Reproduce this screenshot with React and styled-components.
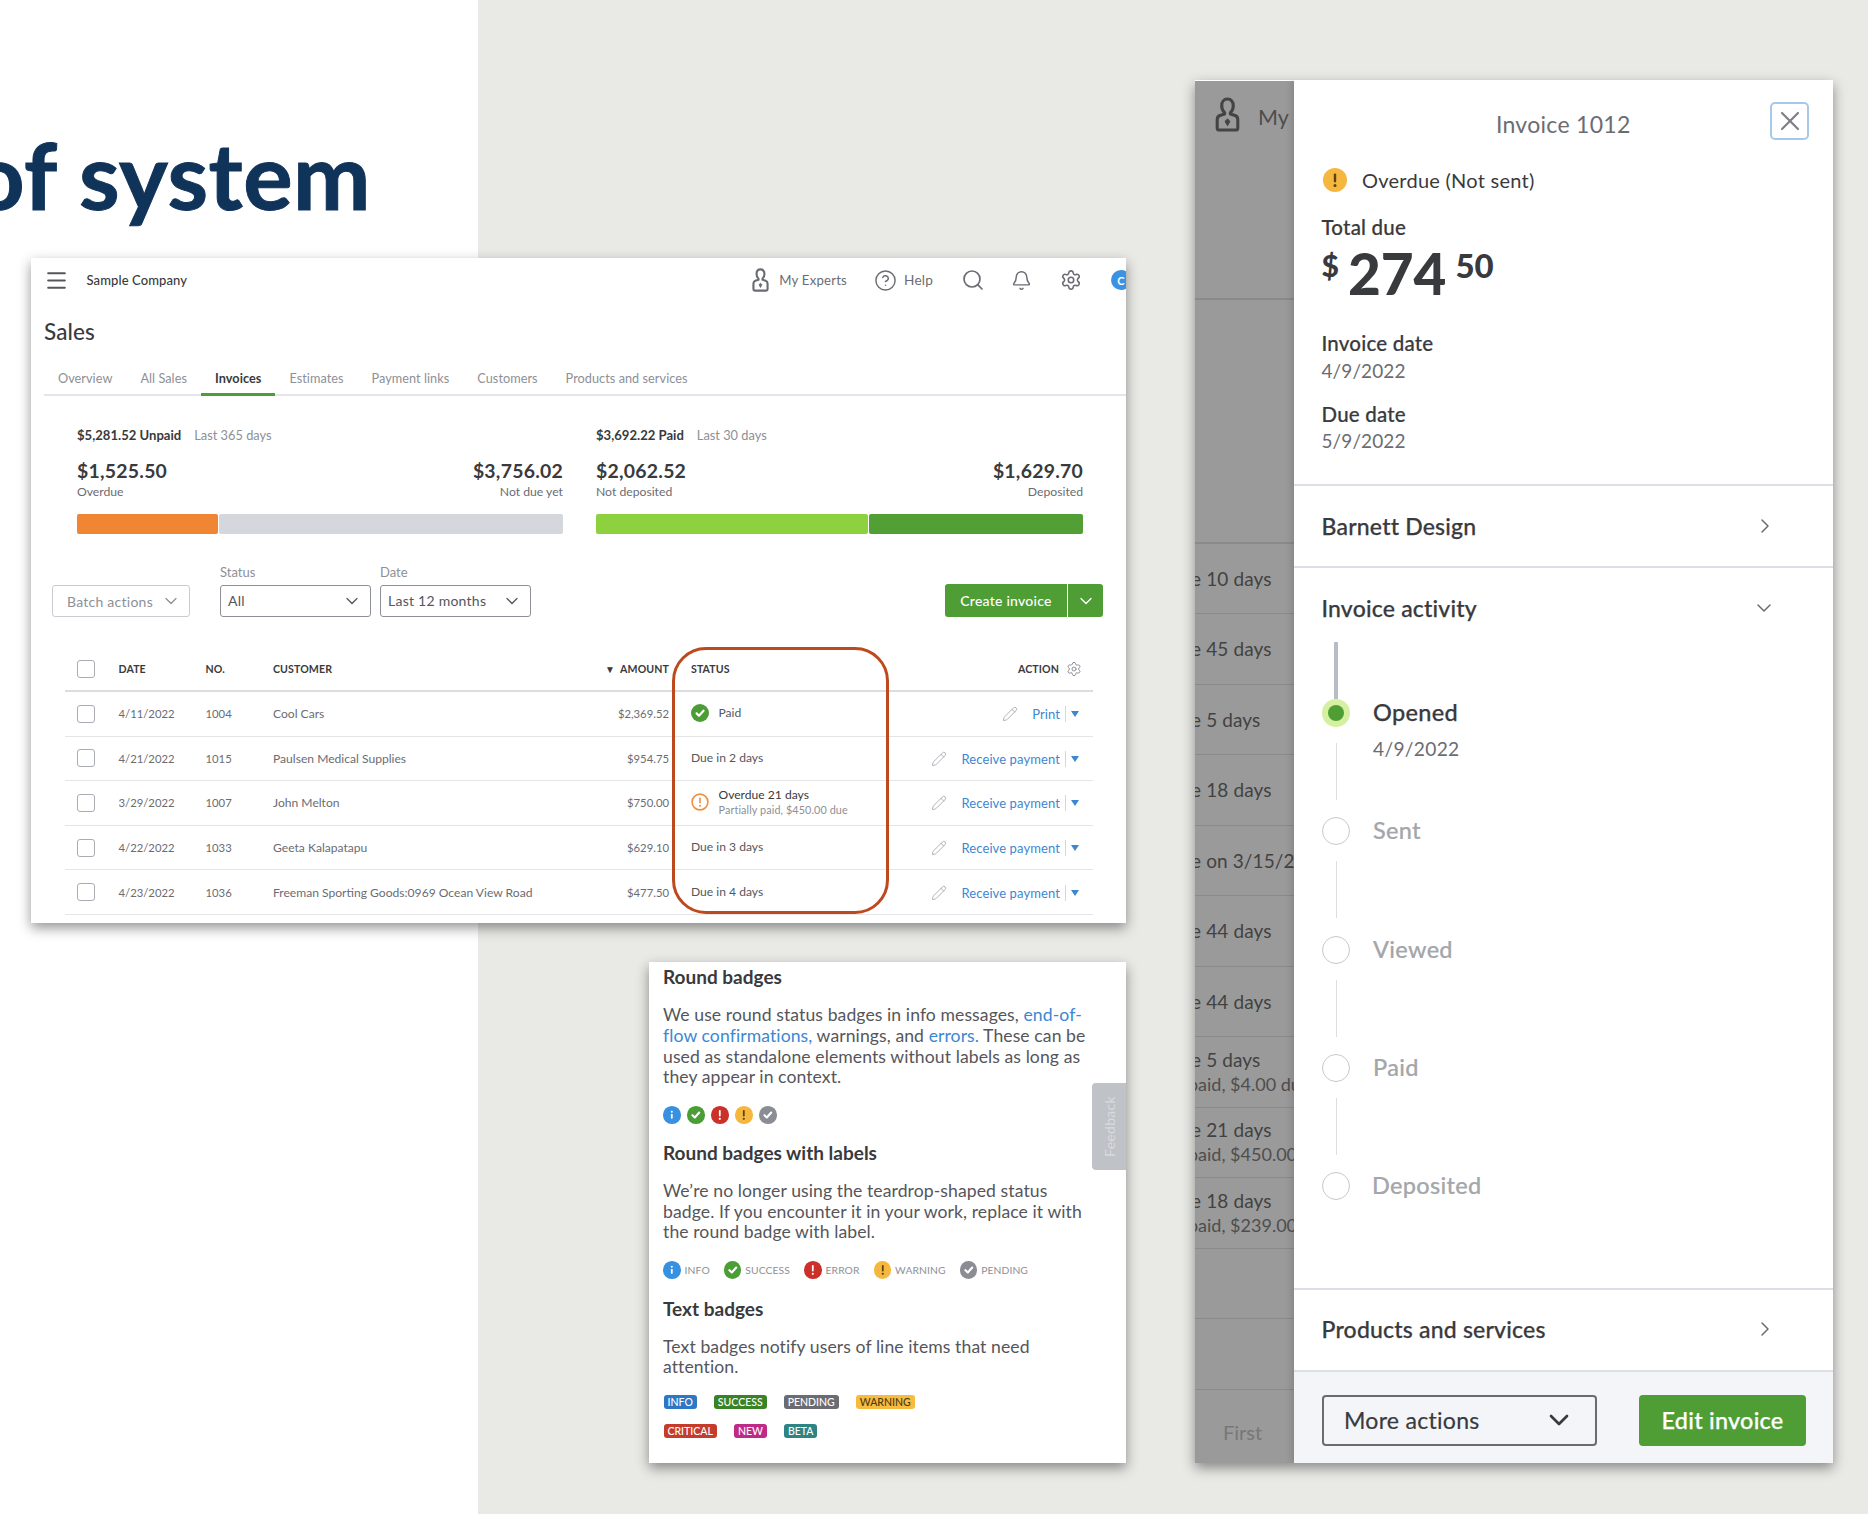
import React from "react";
import styled, { createGlobalStyle } from "styled-components";
import { Search, Bell, Settings, ChevronDown, ChevronRight, X, Pencil, CircleHelp, Menu } from "lucide-react";

const Global = createGlobalStyle`
  html, body { margin: 0; padding: 0; background: #e9eae6; }
  * { box-sizing: border-box; }
  body { font-family: Lato, "Noto Sans", "Liberation Sans", sans-serif; color: #393a3d; }
`;

const Canvas = styled.div`
  position: relative; width: 1868px; height: 1514px; overflow: hidden;
  background: #e9eae6; display: flex;
`;
const Hero = styled.div`
  width: 478px; height: 100%; background: #fff; overflow: hidden;
  display: flex; justify-content: flex-end; padding: 117px 107px 0 0;
`;
const HeroTitle = styled.h1`
  margin: 0; flex: none; font-size: 92.5px; line-height: 116px; font-weight: 700;
  color: #10335a; white-space: nowrap; height: 116px; -webkit-text-stroke: 1px #10335a; letter-spacing: .5px;
`;
const Window = styled.section`
  position: absolute; left: ${p => p.$x}px; top: ${p => p.$y}px;
  width: ${p => p.$w}px; height: ${p => p.$h}px;
  background: #fff; overflow: hidden;
  box-shadow: 0 5px 12px rgba(0,0,0,.42);
`;

/* sales */
const TopBar = styled.header`
  height: 44px; display: flex; align-items: center; padding-left: 13px; color: #6b6c72;
`;
const Company = styled.span`
  margin-left: 17.5px; font-size: 13px; color: #393a3d; font-weight: 500; letter-spacing: .1px;
`;
const TopActions = styled.div` margin-left: auto; display: flex; align-items: center; `;
const TopLink = styled.span`
  display: flex; align-items: center; gap: ${p => p.$gap || 10}px; font-size: ${p => p.$fs || 13.6}px; color: #6b6c72;
  margin-right: ${p => p.$mr || 0}px; letter-spacing: .2px;
`;
const Avatar = styled.span`
  width: 20px; height: 20px; border-radius: 50%; background: #3b92e3; color: #fff; flex: none;
  font-size: 11px; font-weight: 700; display: flex; align-items: center; justify-content: center;
  margin-right: -5px;
`;
const PageTitle = styled.h2`
  margin: 0; height: 60px; display: flex; align-items: center; padding: 0 0 2px 13px;
  font-size: 22.5px; font-weight: 500; color: #393a3d; letter-spacing: .1px;
`;
const Tabs = styled.nav`
  height: 34px; margin-left: 13px; display: flex; border-bottom: 2px solid #e3e5ea;
`;
const Tab = styled.span`
  height: 34px; padding: 0 14px; display: flex; align-items: center; font-size: 12.7px;
  color: ${p => p.$active ? "#393a3d" : "#8d9096"}; font-weight: ${p => p.$active ? 700 : 400};
  border-bottom: 3px solid ${p => p.$active ? "#4f9e35" : "transparent"};
  letter-spacing: .05px;
`;
const Stats = styled.div`
  display: grid; grid-template-columns: 486px 487px; column-gap: 33px; padding: 30px 0 0 46px;
`;
const StatTop = styled.div`
  font-size: 12.8px; line-height: 18px; height: 18px; display: flex; gap: 13px; color: #8d9096;
  b { color: #393a3d; font-weight: 700; font-size: 13.1px; }
`;
const StatSplit = styled.div` display: flex; justify-content: space-between; margin-top: 16px; `;
const StatAmount = styled.div`
  font-size: 19.4px; line-height: 22px; font-weight: 700; color: #393a3d; letter-spacing: .25px;
  text-align: ${p => p.$right ? "right" : "left"};
`;
const StatLabel = styled.div`
  font-size: 12.2px; line-height: 16px; margin-top: 2px; color: #6b6c72;
  text-align: ${p => p.$right ? "right" : "left"};
`;
const Bar = styled.div` display: flex; gap: 1px; height: 20px; margin-top: 14px; `;
const BarPart = styled.div`
  border-radius: 2px; background: ${p => p.$c};
`;
const Filters = styled.div`
  margin-top: 30px; padding: 0 23px 0 21px; display: flex; align-items: flex-end; height: 53px;
`;
const Field = styled.label`
  display: flex; flex-direction: column; margin-left: ${p => p.$ml}px;
  font-size: 13px; line-height: 14px; color: #8d9096; gap: 6px;
`;
const Select = styled.div`
  width: ${p => p.$w}px; height: 32px; border-radius: 3px; background: #fff;
  border: 1px solid ${p => p.$muted ? "#c9ccd1" : "#8d9096"};
  color: ${p => p.$muted ? "#8d9096" : "#55565b"}; font-size: 14px; letter-spacing: .25px;
  display: flex; align-items: center; justify-content: space-between; padding: 0 8px 0 ${p => p.$muted ? 14 : 7}px;
`;
const Split = styled.div`
  margin-left: auto; display: flex; gap: 1px; height: 33px; color: #fff; font-size: 14px; letter-spacing: .25px;
`;
const SplitPart = styled.div`
  width: ${p => p.$w}px; background: #4f9e35; border-radius: ${p => p.$r};
  display: flex; align-items: center; justify-content: center; font-weight: 500;
`;
const Table = styled.div` margin: 31px 33px 0 34px; `;
const Row = styled.div`
  display: grid; grid-template-columns: 41.5px 87px 67.5px 1fr 100px 180px 244px;
  height: ${p => p.$head ? 44 : 44.6}px; align-items: center; padding-left: 12px;
  border-bottom: ${p => p.$head ? 2 : 1}px solid ${p => p.$head ? "#dcdde0" : "#e3e5e8"};
  font-size: 12.1px; color: #6b6c72;
`;
const Head = styled.span`
  font-size: 10.6px; font-weight: 700; color: #393a3d; letter-spacing: .1px; white-space: nowrap;
  text-align: ${p => p.$right ? "right" : "left"};
  padding-left: ${p => p.$pl || 0}px;
`;
const Box = styled.span`
  width: 18px; height: 18px; border: 1px solid #a9acb2; border-radius: 3px; display: block; background: #fff;
`;
const Numeric = styled.span` font-size: 11.3px; text-align: ${p => p.$right ? "right" : "left"}; `;
const StatusCell = styled.div`
  padding-left: 22px; display: flex; align-items: center; color: #55565b; gap: 9.5px; position: relative; top: -1px;
`;
const StatusStack = styled.div`
  line-height: 15px; color: #393a3d; font-size: 12.1px;
  small { display: block; font-size: 10.8px; color: #8d9096; letter-spacing: .1px; }
`;
const ActionCell = styled.div`
  display: flex; align-items: center; justify-content: flex-end; padding-right: 14px;
  color: #3b87d1; font-size: 13px; letter-spacing: .1px; position: relative; top: .5px;
`;
const ActionHead = styled.div`
  display: flex; align-items: center; justify-content: flex-end; gap: 7px; padding-right: 11px; color: #8d9096;
`;
const EditIcon = styled.span` display: flex; color: #a9acb2; margin-right: 14px; `;
const Sep = styled.span` width: 1px; height: 16px; background: #d4d7dc; margin: 0 5px; `;
const Caret = styled.span`
  width: 0; height: 0; border-left: 4.5px solid transparent; border-right: 4.5px solid transparent;
  border-top: 6px solid #3b87d1;
`;
const SortArrow = styled.span` font-size: 10px; margin-right: 5px; `;
const Highlight = styled.div`
  position: absolute; left: 641px; top: 389px; width: 217px; height: 267px;
  border: 3px solid #bd4a1f; border-radius: 34px; pointer-events: none;
`;

/* docs */
const Doc = styled.div`
  padding: 5px 14px 0 14px; display: flex; flex-direction: column; gap: 18.3px;
`;
const DocHeading = styled.h3`
  margin: ${p => p.$mt || 0}px 0 ${p => p.$mb || 0}px; font-size: 19px; line-height: 20px; font-weight: 700; color: #393a3d;
`;
const DocText = styled.p`
  margin: 0 0 ${p => p.$mb || 0}px; font-size: 17.6px; line-height: 20.67px; color: #55565b; white-space: nowrap; letter-spacing: .08px;
  a { color: #3b87d1; }
`;
const BadgeRow = styled.div` display: flex; align-items: center; height: 18px; gap: ${p => p.$gap}px; `;
const Labelled = styled.span`
  display: flex; align-items: center; gap: 4px; font-size: 10.3px; color: #8d9096; letter-spacing: .1px;
`;
const TextRows = styled.div` display: flex; flex-direction: column; gap: 15px; `;
const TextRow = styled.div` display: flex; gap: 17px; padding-left: .5px; `;
const TextBadge = styled.span`
  height: 14px; padding: 0 4px; border-radius: 3px; background: ${p => p.$bg}; color: ${p => p.$fg || "#fff"};
  font-size: 10.5px; line-height: 14px; font-weight: 500;
`;
const Feedback = styled.div`
  position: absolute; right: 0; top: 121px; width: 34px; height: 87px; background: #bfc2c6;
  border-radius: 4px 0 0 4px; color: #d9dbde; font-size: 14px; letter-spacing: .3px;
  display: flex; align-items: center; justify-content: center;
  span { transform: rotate(-90deg); white-space: nowrap; }
`;

/* invoice */
const Panes = styled.div` display: flex; height: 100%; padding-top: 1px; `;
const Strip = styled.div`
  width: 98.5px; flex: none; background: #9a9a9a; overflow: hidden; color: #3f3f3f;
`;
const StripHead = styled.div`
  height: 218.5px; padding: 16px 0 0 20px; display: flex; gap: 18px; align-items: flex-start;
  border-bottom: 2px solid #8a8a8a; font-size: 21.5px; color: #4e4e4e; line-height: 40px;
`;
const StripBlank = styled.div` height: 244px; border-bottom: 2px solid #8a8a8a; `;
const StripRow = styled.div`
  height: 70.5px; border-bottom: 1px solid #8a8a8a; display: flex; flex-direction: column; justify-content: center;
  font-size: 19px; line-height: 25px; white-space: nowrap; color: #424242;
`;
const Clip = styled.span` display: block; margin-left: -67px; letter-spacing: .1px; `;
const ClipSub = styled.span` display: block; margin-left: -75px; font-size: 18px; color: #4e4e4e; `;
const StripFirst = styled.div`
  padding: 28px 0 0 28px; font-size: 20px; color: #777; line-height: 28px;
`;
const Drawer = styled.div`
  flex: 1; background: #fff; display: flex; flex-direction: column; box-shadow: -3px 0 6px rgba(0,0,0,.12); position: relative; margin-top: -1px; padding-top: 1px;
`;
const Summary = styled.div`
  height: 405px; border-bottom: 2px solid #dcdfe6; flex: none;
`;
const DrawerHead = styled.div`
  display: grid; grid-template-columns: 1fr auto 1fr; padding: 21px 24px 0 0; height: 59px;
`;
const DrawerTitle = styled.div`
  grid-column: 2; font-size: 23px; line-height: 26px; color: #6b6c72; margin-top: 9px; letter-spacing: .3px; padding-left: 24px;
`;
const CloseButton = styled.div`
  justify-self: end; grid-column: 3; width: 39px; height: 38px; border: 2.5px solid #a8c8e8; border-radius: 5px;
  display: flex; align-items: center; justify-content: center; color: #7d7f85;
`;
const SummaryBody = styled.div` padding: 28px 0 0 28px; `;
const StatusLine = styled.div`
  display: flex; align-items: center; gap: 15px; font-size: 20px; line-height: 24px; color: #393a3d; padding-left: 1.5px; letter-spacing: .25px;
`;
const FieldLabel = styled.div`
  font-size: 20.5px; line-height: 24px; color: #393a3d; font-weight: 500; letter-spacing: .2px;
  margin-top: ${p => p.$mt}px;
  -webkit-text-stroke: .2px #393a3d;
`;
const FieldValue = styled.div`
  font-size: 19px; line-height: 24px; color: #6b6c72; margin-top: ${p => p.$mt}px; letter-spacing: .1px;
`;
const Total = styled.div`
  height: 56px; display: flex; align-items: flex-start; color: #393a3d; font-weight: 900; margin-top: 6px;
`;
const Currency = styled.span` font-size: 30px; line-height: 30px; margin-top: 5px; margin-right: 9px; `;
const Dollars = styled.span` font-size: 56.6px; line-height: 56px; margin-right: 9px; `;
const Cents = styled.span` font-size: 33px; line-height: 34px; margin-top: 3px; `;
const DrawerRow = styled.div`
  height: 82px; flex: none; display: flex; align-items: center; justify-content: space-between; padding: 0 56px 1px 28px;
  border-bottom: 2px solid #dcdfe6; font-size: 23px; color: #393a3d; font-weight: 500; letter-spacing: .2px;
  -webkit-text-stroke: .25px #393a3d;
  svg { color: #6b6c72; }
`;
const Activity = styled.div`
  height: 721.5px; flex: none; border-bottom: 2px solid #dcdfe6; padding: 26px 0 0 28.5px;
`;
const ActivityHead = styled.div`
  height: 28px; display: flex; align-items: center; justify-content: space-between; padding-right: 57px;
  font-size: 23px; color: #393a3d; font-weight: 500; letter-spacing: .2px; margin-left: -.5px;
  -webkit-text-stroke: .25px #393a3d;
  svg { color: #6b6c72; }
`;
const TopStem = styled.div` width: 4px; height: 57px; background: #b9bcc6; margin: 20px 0 0 12px; `;
const Step = styled.div`
  height: 118.3px; display: grid; grid-template-columns: 28px 1fr; column-gap: ${p => p.$gap || 23}px;
`;
const Marker = styled.div` display: flex; flex-direction: column; align-items: center; `;
const Dot = styled.span`
  width: 28px; height: 28px; border-radius: 50%; flex: none; display: flex; align-items: center; justify-content: center;
  border: ${p => p.$active ? "none" : "1.5px solid #c6c8cc"};
  background: ${p => p.$active ? "#d5f0a0" : "#fff"};
  i { width: 16px; height: 16px; background: #4f9e35; border-radius: 50%; display: ${p => p.$active ? "block" : "none"}; }
`;
const Stem = styled.span` width: 1px; height: 57px; background: #dcdee1; margin-top: 16px; `;
const StepTitle = styled.div`
  font-size: 23.5px; line-height: 28px; letter-spacing: .3px; font-weight: 500; margin-top: -1px;
  color: ${p => p.$active ? "#393a3d" : "#a4a6aa"};
  ${p => p.$active ? "-webkit-text-stroke: .25px #393a3d;" : "-webkit-text-stroke: .2px #a4a6aa;"}
`;
const StepDate = styled.div`
  font-size: 19.2px; line-height: 26px; color: #6b6c72; margin-top: 10px; letter-spacing: .3px;
`;
const Footer = styled.div`
  flex: 1; background: #f3f5f9; padding: 23px 27px 0 28.5px; display: flex; justify-content: space-between; align-items: flex-start;
`;
const MoreActions = styled.div`
  width: 275px; height: 51px; border: 2px solid #6b6c72; border-radius: 4px; display: flex; align-items: center; justify-content: space-between;
  padding: 0 20px 0 20px; font-size: 23.1px; color: #393a3d; letter-spacing: .25px; -webkit-text-stroke: .2px #393a3d;
`;
const EditButton = styled.div`
  width: 167px; height: 51px; border-radius: 4px; background: #4f9e35; color: #fff; display: flex; align-items: center; justify-content: center;
  font-size: 23.4px; letter-spacing: .25px; font-weight: 500; -webkit-text-stroke: .25px #fff;
`;

const BadgeShape = styled.span`
  width: ${p => p.$s}px; height: ${p => p.$s}px; border-radius: 50%; background: ${p => p.$c}; flex: none; color: ${p => p.$fg};
  display: inline-flex; align-items: center; justify-content: center;
`;
const colors = { info: "#3790e0", success: "#4a9e35", error: "#cb3029", warning: "#f5b73d", pending: "#8b8d94" };
const Glyph = ({ kind }) => {
  if (kind === "success" || kind === "pending")
    return <svg viewBox="0 0 20 20" width="100%" height="100%" fill="none" stroke="currentColor" strokeWidth="2.4" strokeLinecap="round" strokeLinejoin="round"><path d="M6.2 10.4l2.7 2.6 5-5.6" /></svg>;
  if (kind === "info")
    return <svg viewBox="0 0 20 20" width="100%" height="100%" fill="currentColor"><circle cx="10" cy="6.6" r="1.2" /><rect x="9" y="9" width="2" height="5.5" rx=".8" /></svg>;
  return <svg viewBox="0 0 20 20" width="100%" height="100%" fill="currentColor"><rect x="9" y="4.6" width="2" height="7.4" rx=".9" /><circle cx="10" cy="14.6" r="1.25" /></svg>;
};
const RoundBadge = ({ kind, size = 18 }) => (
  <BadgeShape $s={size} $c={colors[kind]} $fg={kind === "warning" ? "#5a4210" : "#fff"}><Glyph kind={kind} /></BadgeShape>
);

const Expert = ({ w, h, color = "currentColor" }) => (
  <svg viewBox="0 0 24 34" width={w} height={h} fill="none" stroke={color} strokeWidth="3" strokeLinejoin="round">
    <path d="M12 2c-3.600 0-5.600 2.800-5.600 6.400 0 3 1.100 5.400 2.800 6.800v1.400L4.600 18C2.700 18.700 2 20 2 22v8c0 1.200.8 2 2 2h16c1.200 0 2-.8 2-2v-8c0-2-.7-3.300-2.600-4l-4.600-1.400v-1.400c1.700-1.400 2.800-3.800 2.800-6.800C17.600 4.800 15.600 2 12 2z" />
    <path d="M12 21.500l2.200 2.200-2.200 4-2.200-4z" fill={color} strokeWidth="1" />
  </svg>
);

const rows = [
  ["4/11/2022", "1004", "Cool Cars", "$2,369.52", "paid", "Print"],
  ["4/21/2022", "1015", "Paulsen Medical Supplies", "$954.75", "Due in 2 days", "Receive payment"],
  ["3/29/2022", "1007", "John Melton", "$750.00", "overdue", "Receive payment"],
  ["4/22/2022", "1033", "Geeta Kalapatapu", "$629.10", "Due in 3 days", "Receive payment"],
  ["4/23/2022", "1036", "Freeman Sporting Goods:0969 Ocean View Road", "$477.50", "Due in 4 days", "Receive payment"],
];

const OverdueIcon = () => (
  <svg width="18" height="18" viewBox="0 0 18 18" fill="none"><circle cx="9" cy="9" r="7.9" stroke="#f08f3c" strokeWidth="1.6" /><rect x="8.200" y="4.400" width="1.600" height="6" rx=".8" fill="#f08f3c" /><circle cx="9" cy="12.800" r="1" fill="#f08f3c" /></svg>
);

const Status = ({ v }) => {
  if (v === "paid") return <StatusCell><RoundBadge kind="success" /><span>Paid</span></StatusCell>;
  if (v === "overdue") return (
    <StatusCell><OverdueIcon /><StatusStack>Overdue 21 days<small>Partially paid, $450.00 due</small></StatusStack></StatusCell>
  );
  return <StatusCell>{v}</StatusCell>;
};

const sideRows = [
  ["Overdue 10 days"], ["Overdue 45 days"], ["Overdue 5 days"], ["Overdue 18 days"], ["Overdue on 3/15/2022"],
  ["Overdue 44 days"], ["Overdue 44 days"], ["Overdue 5 days", "Partially paid, $4.00 due"],
  ["Overdue 21 days", "Partially paid, $450.00 due"], ["Overdue 18 days", "Partially paid, $239.00 due"],
  [""], [""],
];

const steps = ["Sent", "Viewed", "Paid", "Deposited"];

export default function App() {
  return (
    <Canvas>
      <Global />
      <Hero><HeroTitle>of system</HeroTitle></Hero>

      <Window $x={31} $y={258} $w={1095} $h={665}>
        <TopBar>
          <Menu size={25} strokeWidth={1.9} color="#55565b" />
          <Company>Sample Company</Company>
          <TopActions>
            <TopLink $mr={27} $fs={13.2}><Expert w={17} h={24} />My Experts</TopLink>
            <TopLink $mr={28} $gap={7}><CircleHelp size={23} strokeWidth={1.5} />Help</TopLink>
            <TopLink $mr={26}><Search size={24} strokeWidth={1.7} /></TopLink>
            <TopLink $mr={28}><Bell size={21} strokeWidth={1.7} /></TopLink>
            <TopLink $mr={29}><Settings size={22} strokeWidth={1.7} /></TopLink>
            <Avatar>C</Avatar>
          </TopActions>
        </TopBar>
        <PageTitle>Sales</PageTitle>
        <Tabs>
          {["Overview", "All Sales", "Invoices", "Estimates", "Payment links", "Customers", "Products and services"].map(t =>
            <Tab key={t} $active={t === "Invoices"}>{t}</Tab>)}
        </Tabs>
        <Stats>
          <div>
            <StatTop><b>$5,281.52 Unpaid</b><span>Last 365 days</span></StatTop>
            <StatSplit>
              <div><StatAmount>$1,525.50</StatAmount><StatLabel>Overdue</StatLabel></div>
              <div><StatAmount $right>$3,756.02</StatAmount><StatLabel $right>Not due yet</StatLabel></div>
            </StatSplit>
            <Bar><BarPart $c="#f08534" style={{ width: 141 }} /><BarPart $c="#d4d7dc" style={{ flex: 1 }} /></Bar>
          </div>
          <div>
            <StatTop><b>$3,692.22 Paid</b><span>Last 30 days</span></StatTop>
            <StatSplit>
              <div><StatAmount>$2,062.52</StatAmount><StatLabel>Not deposited</StatLabel></div>
              <div><StatAmount $right>$1,629.70</StatAmount><StatLabel $right>Deposited</StatLabel></div>
            </StatSplit>
            <Bar><BarPart $c="#8ed13f" style={{ width: 272 }} /><BarPart $c="#529f36" style={{ flex: 1 }} /></Bar>
          </div>
        </Stats>
        <Filters>
          <Select $w={138} $muted>Batch actions <ChevronDown size={20} strokeWidth={1.5} color="#8d9096" /></Select>
          <Field $ml={30}>Status<Select $w={151}>All <ChevronDown size={20} strokeWidth={1.5} color="#55565b" /></Select></Field>
          <Field $ml={9}>Date<Select $w={151}>Last 12 months <ChevronDown size={20} strokeWidth={1.5} color="#55565b" /></Select></Field>
          <Split>
            <SplitPart $w={122} $r="3px 0 0 3px">Create invoice</SplitPart>
            <SplitPart $w={35} $r="0 3px 3px 0"><ChevronDown size={20} strokeWidth={1.6} /></SplitPart>
          </Split>
        </Filters>
        <Table>
          <Row $head>
            <Box />
            <Head>DATE</Head><Head>NO.</Head><Head>CUSTOMER</Head>
            <Head $right><SortArrow>▼</SortArrow>AMOUNT</Head>
            <Head $pl={22}>STATUS</Head>
            <ActionHead><Head>ACTION</Head><Settings size={16} strokeWidth={1.5} /></ActionHead>
          </Row>
          {rows.map(r => (
            <Row key={r[1]}>
              <Box /><Numeric>{r[0]}</Numeric><Numeric>{r[1]}</Numeric><span>{r[2]}</span><Numeric $right>{r[3]}</Numeric>
              <Status v={r[4]} />
              <ActionCell>
                <EditIcon><Pencil size={16} strokeWidth={1.4} /></EditIcon>
                {r[5]}<Sep /><Caret />
              </ActionCell>
            </Row>
          ))}
        </Table>
        <Highlight />
      </Window>

      <Window $x={649} $y={962} $w={477} $h={501}>
        <Doc>
          <DocHeading>Round badges</DocHeading>
          <DocText>
            We use round status badges in info messages, <a>end-of-</a><br />
            <a>flow confirmations,</a> warnings, and <a>errors.</a> These can be<br />
            used as standalone elements without labels as long as<br />
            they appear in context.
          </DocText>
          <BadgeRow $gap={6.4}>
            {["info", "success", "error", "warning", "pending"].map(k => <RoundBadge key={k} kind={k} size={17.6} />)}
          </BadgeRow>
          <DocHeading>Round badges with labels</DocHeading>
          <DocText>
            We’re no longer using the teardrop-shaped status<br />
            badge. If you encounter it in your work, replace it with<br />
            the round badge with label.
          </DocText>
          <BadgeRow $gap={14}>
            {[["info", "INFO"], ["success", "SUCCESS"], ["error", "ERROR"], ["warning", "WARNING"], ["pending", "PENDING"]].map(([k, l]) =>
              <Labelled key={k}><RoundBadge kind={k} size={17.6} />{l}</Labelled>)}
          </BadgeRow>
          <DocHeading $mt={2} $mb={-1}>Text badges</DocHeading>
          <DocText $mb={-1}>
            Text badges notify users of line items that need<br />
            attention.
          </DocText>
          <TextRows>
            <TextRow>
              <TextBadge $bg="#2e77c4">INFO</TextBadge>
              <TextBadge $bg="#3a8226">SUCCESS</TextBadge>
              <TextBadge $bg="#6b6c72">PENDING</TextBadge>
              <TextBadge $bg="#f6bb3f" $fg="#4a3a12">WARNING</TextBadge>
            </TextRow>
            <TextRow>
              <TextBadge $bg="#c63c2a">CRITICAL</TextBadge>
              <TextBadge $bg="#bf2a86">NEW</TextBadge>
              <TextBadge $bg="#2e8383">BETA</TextBadge>
            </TextRow>
          </TextRows>
        </Doc>
        <Feedback><span>Feedback</span></Feedback>
      </Window>

      <Window $x={1195} $y={80} $w={638} $h={1383}>
        <Panes>
          <Strip>
            <StripHead><Expert w={25} h={35} color="#444" />My</StripHead>
            <StripBlank />
            {sideRows.map((r, i) => (
              <StripRow key={i}>
                <Clip>{r[0]}</Clip>
                {r[1] && <ClipSub>{r[1]}</ClipSub>}
              </StripRow>
            ))}
            <StripFirst>First</StripFirst>
          </Strip>
          <Drawer>
            <Summary>
              <DrawerHead>
                <DrawerTitle>Invoice 1012</DrawerTitle>
                <CloseButton><X size={32} strokeWidth={1.6} /></CloseButton>
              </DrawerHead>
              <SummaryBody>
                <StatusLine><RoundBadge kind="warning" size={24} />Overdue (Not sent)</StatusLine>
                <FieldLabel $mt={23}>Total due</FieldLabel>
                <Total><Currency>$</Currency><Dollars>274</Dollars><Cents>50</Cents></Total>
                <FieldLabel $mt={30}>Invoice date</FieldLabel>
                <FieldValue $mt={4}>4/9/2022</FieldValue>
                <FieldLabel $mt={19}>Due date</FieldLabel>
                <FieldValue $mt={3}>5/9/2022</FieldValue>
              </SummaryBody>
            </Summary>
            <DrawerRow>Barnett Design<ChevronRight size={24} strokeWidth={1.5} /></DrawerRow>
            <Activity>
              <ActivityHead>Invoice activity<ChevronDown size={24} strokeWidth={1.5} /></ActivityHead>
              <TopStem />
              <Step>
                <Marker><Dot $active><i /></Dot><Stem /></Marker>
                <div><StepTitle $active>Opened</StepTitle><StepDate>4/9/2022</StepDate></div>
              </Step>
              {steps.map((s, i) => (
                <Step key={s} $gap={s === "Deposited" ? 22 : 23}>
                  <Marker><Dot />{i < 3 && <Stem />}</Marker>
                  <StepTitle>{s}</StepTitle>
                </Step>
              ))}
            </Activity>
            <DrawerRow>Products and services<ChevronRight size={24} strokeWidth={1.5} /></DrawerRow>
            <Footer>
              <MoreActions>More actions<ChevronDown size={32} strokeWidth={2} color="#393a3d" /></MoreActions>
              <EditButton>Edit invoice</EditButton>
            </Footer>
          </Drawer>
        </Panes>
      </Window>
    </Canvas>
  );
}
